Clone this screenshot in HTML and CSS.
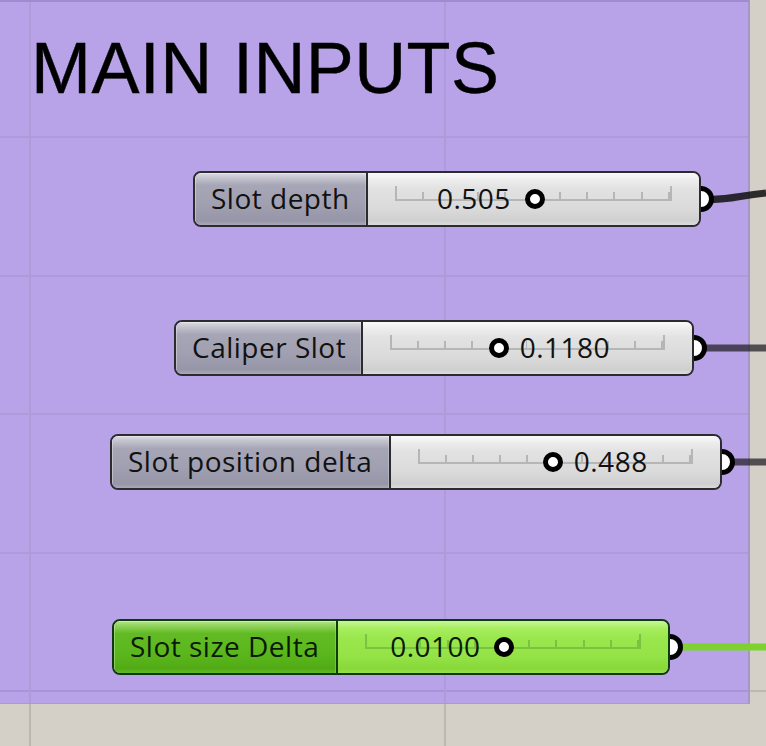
FILE: index.html
```html
<!DOCTYPE html>
<html>
<head>
<meta charset="utf-8">
<link rel="stylesheet" href="styles.css">
</head>
<body>
<div class="canvas">
  <div class="group">
    <h1 class="group-title">MAIN INPUTS</h1>
  </div>

  <svg class="wires" width="766" height="746" viewBox="0 0 766 746">
    <path d="M701 200 C 735 200, 740 195, 766 193" class="wire wire-dark"/>
    <path d="M694 348 L 766 348" class="wire wire-grey"/>
    <path d="M722 462 L 766 462" class="wire wire-grey"/>
    <path d="M670 647 L 766 647" class="wire wire-green"/>
  </svg>

  <div class="slider s1">
    <div class="grip"></div>
    <div class="body">
      <div class="label">Slot depth</div>
      <div class="value">
        <div class="rail"></div>
        <div class="knob" style="left: calc(27px + 0.505 * (100% - 54px))"></div>
        <span class="num" style="right: calc(100% - 27px - 0.505 * (100% - 54px) + 24px)">0.505</span>
      </div>
    </div>
  </div>

  <div class="slider s2">
    <div class="grip"></div>
    <div class="body">
      <div class="label">Caliper Slot</div>
      <div class="value">
        <div class="rail"></div>
        <div class="knob" style="left: calc(27px + 0.395 * (100% - 54px))"></div>
        <span class="num" style="left: calc(27px + 0.395 * (100% - 54px) + 21px)">0.1180</span>
      </div>
    </div>
  </div>

  <div class="slider s3">
    <div class="grip"></div>
    <div class="body">
      <div class="label">Slot position delta</div>
      <div class="value">
        <div class="rail"></div>
        <div class="knob" style="left: calc(27px + 0.49 * (100% - 54px))"></div>
        <span class="num" style="left: calc(27px + 0.49 * (100% - 54px) + 21px)">0.488</span>
      </div>
    </div>
  </div>

  <div class="slider s4 green">
    <div class="grip"></div>
    <div class="body">
      <div class="label">Slot size Delta</div>
      <div class="value">
        <div class="rail"></div>
        <div class="knob" style="left: calc(27px + 0.502 * (100% - 54px))"></div>
        <span class="num" style="right: calc(100% - 27px - 0.502 * (100% - 54px) + 23px)">0.0100</span>
      </div>
    </div>
  </div>
</div>
</body>
</html>
```

FILE: styles.css
```css
html, body {
  margin: 0;
  padding: 0;
  background: #d4d0c8;
}

.canvas {
  position: relative;
  width: 766px;
  height: 746px;
  overflow: hidden;
  background-color: #d4d0c8;
  background-image:
    linear-gradient(to right, transparent 29px, #bcb8b1 29px, #bcb8b1 31px, transparent 31px),
    linear-gradient(to right, transparent 444px, #bcb8b1 444px, #bcb8b1 446px, transparent 446px),
    linear-gradient(to bottom, transparent 690px, #bcb8b1 690px, #bcb8b1 692px, transparent 692px);
  font-family: "Open Sans", "Noto Sans", sans-serif;
}

.group {
  position: absolute;
  left: -20px;
  top: 0;
  width: 768px;
  height: 701px;
  border-top: 2px solid #9f8ccc;
  border-right: 2px solid #a596c6;
  border-bottom: 1px solid #ab98dc;
  background-color: #b9a3e8;
  background-image:
    linear-gradient(to right, transparent 49px, #b19ad9 49px, #b19ad9 51px, transparent 51px),
    linear-gradient(to right, transparent 464px, #b19ad9 464px, #b19ad9 466px, transparent 466px),
    linear-gradient(to bottom, transparent 134px, #b19ad9 134px, #b19ad9 136px, transparent 136px),
    linear-gradient(to bottom, transparent 273px, #b19ad9 273px, #b19ad9 275px, transparent 275px),
    linear-gradient(to bottom, transparent 411px, #b19ad9 411px, #b19ad9 413px, transparent 413px),
    linear-gradient(to bottom, transparent 550px, #b19ad9 550px, #b19ad9 552px, transparent 552px),
    linear-gradient(to bottom, transparent 688px, #ab94d6 688px, #ab94d6 690px, transparent 690px);
}

.group-title {
  margin: 0;
  position: absolute;
  left: 51px;
  top: 30px;
  font-family: "Liberation Sans", Arial, sans-serif;
  font-weight: normal;
  font-size: 72px;
  line-height: 72px;
  color: #000;
  letter-spacing: 0.4px;
  -webkit-text-stroke: 0.4px #000;
}

.wires {
  position: absolute;
  left: 0;
  top: 0;
}

.wire {
  fill: none;
  stroke-width: 7;
}
.wire-dark { stroke: rgba(20, 20, 20, 0.88); }
.wire-grey { stroke: rgba(30, 28, 34, 0.72); }
.wire-green { stroke: #7dd22e; }

.slider {
  position: absolute;
  height: 56px;
}
.s1 { left: 193px; top: 171px; width: 508px; }
.s2 { left: 174px; top: 320px; width: 520px; }
.s3 { left: 110px; top: 434px; width: 612px; }
.s4 { left: 112px; top: 619px; width: 558px; }

.s1 .label { width: 173px; }
.s2 .label { width: 187px; }
.s3 .label { width: 279px; }
.s4 .label { width: 224px; }

.grip {
  position: absolute;
  right: -13px;
  top: 50%;
  width: 16px;
  height: 16px;
  margin-top: -13px;
  border: 5px solid #000;
  border-radius: 50%;
  background: #fff;
}

.body {
  position: relative;
  display: flex;
  height: 100%;
  box-sizing: border-box;
  border: 2px solid #2c2c2e;
  border-radius: 8px;
  overflow: hidden;
}

.label {
  flex: none;
  box-sizing: border-box;
  display: flex;
  align-items: center;
  padding-left: 16px;
  padding-bottom: 2px;
  border-right: 2px solid #2c2c2e;
  font-size: 28px;
  letter-spacing: 0.5px;
  color: #111;
  white-space: nowrap;
  background: linear-gradient(to bottom, #dcdce3 0%, #c2c1cc 10%, #a7a6b6 24%, #a1a0b1 60%, #9796a8 92%, #a9a8b8 100%);
  box-shadow: inset 1px 1px 0 rgba(255,255,255,0.35), inset -1px 0 0 rgba(255,255,255,0.2);
}

.value {
  position: relative;
  flex: 1;
  background: linear-gradient(to bottom, #fafafa 0%, #ececec 14%, #e2e2e2 30%, #dadada 70%, #cfcfcf 92%, #dcdcdc 100%);
}

.rail {
  position: absolute;
  left: 27px;
  right: 27px;
  top: 13px;
  height: 13px;
  border: 2px solid #b6b6b6;
  border-top: none;
  background-image: repeating-linear-gradient(to right, transparent 0, transparent calc(10% - 2px), #b6b6b6 calc(10% - 2px), #b6b6b6 10%);
  background-size: 100% 7px;
  background-position: left bottom;
  background-repeat: no-repeat;
}

.knob {
  position: absolute;
  top: 50%;
  width: 10px;
  height: 10px;
  margin-left: -10px;
  margin-top: -10px;
  border: 5px solid #000;
  border-radius: 50%;
  background: #fff;
}

.num {
  position: absolute;
  top: 50%;
  transform: translateY(-54%);
  font-size: 28px;
  letter-spacing: 0.5px;
  color: #111;
  white-space: nowrap;
  line-height: 1;
}

/* green slider */
.green .body { border-color: #0f3a0b; }
.green .label {
  border-right-color: #0f3a0b;
  color: #0a1a05;
  background: linear-gradient(to bottom, #b4e68a 0%, #8ed15a 10%, #62bb24 24%, #5cb71e 60%, #52ab15 92%, #62b928 100%);
}
.green .value {
  background: linear-gradient(to bottom, #c8f59a 0%, #a8ee60 14%, #9be84e 30%, #94e246 70%, #88d83a 92%, #98e04c 100%);
}
.green .rail {
  border-color: #78c440;
  background-image: repeating-linear-gradient(to right, transparent 0, transparent calc(10% - 2px), #78c440 calc(10% - 2px), #78c440 10%);
}
.green .num { color: #0a1a05; }
```
